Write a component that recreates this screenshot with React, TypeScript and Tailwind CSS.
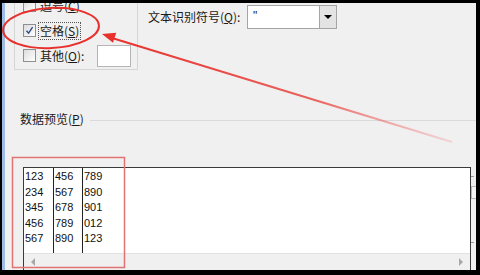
import React from "react";

const cjk = { fontFamily: '"Noto Sans CJK SC", "Noto Sans", sans-serif' };
const mono = { fontFamily: '"Liberation Sans", Arial, sans-serif' };

const rows = [
  ["123", "456", "789"],
  ["234", "567", "890"],
  ["345", "678", "901"],
  ["456", "789", "012"],
  ["567", "890", "123"],
];

function Checkbox({ checked }: { checked?: boolean }) {
  return (
    <span className="flex h-[13px] w-[13px] shrink-0 items-center justify-center border border-[#8e8f8f] bg-gradient-to-br from-[#dcdcdc] to-white">
      {checked && (
        <svg width="9" height="9" viewBox="0 0 9 9">
          <path d="M1.5 4.8 L3.6 7.2 L7.6 1.2" fill="none" stroke="#2a4a8a" strokeWidth="1.4" />
        </svg>
      )}
    </span>
  );
}

function Label({ text, hotkey, colon }: { text: string; hotkey: string; colon?: boolean }) {
  return (
    <>
      {text}(<span className="underline">{hotkey}</span>){colon ? ":" : ""}
    </>
  );
}

export default function App() {
  return (
    <div className="relative flex h-[275px] w-[480px] bg-black pb-[5px] pl-[2px] pr-[4px] pt-[3px]">
      <div className="w-[3px] bg-[#9dbbe3]" />
      <div className="flex flex-1 flex-col overflow-hidden bg-[#f0f0f0] text-[12px] text-[#1a1a1a]" style={cjk}>
        <div className="flex h-[67px] items-start">
          {/* 分隔符号 group */}
          <div className="ml-[9px] h-[67px] w-[124px] border-x border-b border-[#d5d5d5]">
            <div className="-mt-[10px] pl-[8px]">
              <div className="flex h-[25px] items-center gap-[4px]">
                <Checkbox />
                <span><Label text="逗号" hotkey="C" /></span>
              </div>
              <div className="flex h-[25px] items-center gap-[2px]">
                <Checkbox checked />
                <span className="border border-dotted border-[#555] px-[1px] leading-[16px]">
                  <Label text="空格" hotkey="S" />
                </span>
              </div>
              <div className="flex h-[25px] items-center gap-[4px]">
                <Checkbox />
                <span><Label text="其他" hotkey="O" colon /></span>
                <span className="ml-[9px] h-[22px] w-[34px] border border-[#b5b5b5] bg-white" />
              </div>
            </div>
          </div>

          <div className="ml-[10px] mt-[2px] flex h-[24px] items-center">
            <span className="w-[99px]"><Label text="文本识别符号" hotkey="Q" colon /></span>
            <div className="flex h-[24px] w-[90px] border border-[#a5a5a5] bg-white">
              <span className="flex-1 pl-[5px] leading-[20px]" style={mono}>"</span>
              <span className="flex w-[17px] items-center justify-center border-l border-[#a5a5a5] bg-[#e3e3e3]">
                <span className="h-0 w-0 border-x-[4px] border-t-[4px] border-x-transparent border-t-black" />
              </span>
            </div>
          </div>
        </div>

        <div className="mt-[41px] flex h-[16px] items-center pl-[15px]">
          <span><Label text="数据预览" hotkey="P" /></span>
          <span className="ml-[6px] mt-[2px] h-px flex-1 bg-[#dadada]" />
        </div>

        <div className="mt-[40px] flex flex-1">
          <div className="ml-[18px] flex flex-1 flex-col border-l border-r border-t border-[#3a3a3a]">
            <div className="flex h-[85px] bg-white text-[11px] text-[#111]" style={mono}>
              {[0, 1, 2].map((c) => (
                <div key={c} className={`${c === 0 ? "" : "border-l border-[#222]"} ${c === 2 ? "w-[40px]" : "w-[29px]"} pl-[1px] pt-[1px] leading-[15.5px]`}>
                  {rows.map((r) => (
                    <div key={r[c]}>{r[c]}</div>
                  ))}
                </div>
              ))}
            </div>
            <div className="flex flex-1 items-center justify-between border-t border-[#e2e2e2] bg-[#f0f0f0] px-[7px]">
              <span className="h-0 w-0 border-y-[4px] border-r-[4px] border-y-transparent border-r-[#a8a8a8]" />
              <span className="h-0 w-0 border-y-[4px] border-l-[4px] border-y-transparent border-l-[#a8a8a8]" />
            </div>
          </div>
          <div className="flex w-[5px] flex-col pt-[9px]">
            <span className="h-px w-[3px] bg-[#9a9a9a]" />
            <span className="mt-[9px] h-[13px] w-[5px] border border-r-0 border-[#b8b8b8] bg-[#f6f6f6]" />
            <span className="mt-[43px] h-px w-[3px] bg-[#9a9a9a]" />
          </div>
        </div>
      </div>

      {/* red annotations */}
      <svg className="pointer-events-none absolute inset-0" width="480" height="275" viewBox="0 0 480 275">
        <defs>
          <linearGradient id="fade" gradientUnits="userSpaceOnUse" x1="452" y1="142" x2="112" y2="38">
            <stop offset="0" stopColor="#f08080" stopOpacity="0.25" />
            <stop offset="0.4" stopColor="#e8403a" stopOpacity="0.8" />
            <stop offset="1" stopColor="#e8302c" stopOpacity="1" />
          </linearGradient>
        </defs>
        <ellipse cx="51" cy="28" rx="48" ry="20" transform="rotate(-3 51 28)" fill="none" stroke="#e8302c" strokeWidth="2" />
        <line x1="452" y1="142" x2="112" y2="38" stroke="url(#fade)" strokeWidth="2" />
        <polygon points="102,34 116.2,32.8 113,42.8" fill="#e8302c" />
        <rect x="12.5" y="157.5" width="112" height="110" fill="none" stroke="#e27373" strokeWidth="1.5" />
      </svg>
    </div>
  );
}
